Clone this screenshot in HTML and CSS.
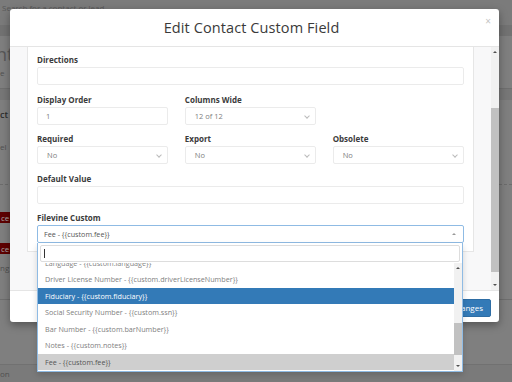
FILE: index.html
```html
<!DOCTYPE html>
<html lang="en">
<head>
<meta charset="utf-8">
<meta name="viewport" content="width=device-width,initial-scale=1">
<title>Edit Contact Custom Field</title>
<link rel="stylesheet" href="styles.css">
</head>
<body>

<!-- PAGE BEHIND THE MODAL (dimmed, mostly covered) -->
<div class="page">
  <div class="row topbar"><span class="search">Search for a contact or lead</span></div>
  <div class="row band"></div>
  <div class="row hero">
    <span class="big">nt</span>
    <span class="small">e</span>
  </div>
  <div class="row band2"></div>
  <div class="row r-ct"><span class="bold">ct</span></div>
  <div class="row r-el"><span class="small">el</span></div>
  <div class="row r-btn"><span class="redbtn">ce F</span></div>
  <div class="row r-btn2"><span class="redbtn">ce F</span></div>
  <div class="row r-ng"><span class="small">ng</span></div>
  <div class="row r-mid"></div>
  <div class="row r-foot"><span class="small">on</span></div>
</div>

<!-- MODAL -->
<div class="modal">
  <div class="modal-header">
    <h4>Edit Contact Custom Field</h4>
    <span class="close">×</span>
  </div>

  <div class="modal-body">
    <div class="scroll-area">
      <div class="card">
        <div class="group">
          <label>Directions</label>
          <div class="input"></div>
        </div>

        <div class="grid3">
          <div class="group">
            <label>Display Order</label>
            <div class="input">1</div>
          </div>
          <div class="group">
            <label>Columns Wide</label>
            <div class="input select">12 of 12<span class="chev"></span></div>
          </div>
        </div>

        <div class="grid3">
          <div class="group">
            <label>Required</label>
            <div class="input select">No<span class="chev"></span></div>
          </div>
          <div class="group">
            <label>Export</label>
            <div class="input select">No<span class="chev"></span></div>
          </div>
          <div class="group">
            <label>Obsolete</label>
            <div class="input select">No<span class="chev"></span></div>
          </div>
        </div>

        <div class="group">
          <label>Default Value</label>
          <div class="input"></div>
        </div>

        <div class="group last">
          <label>Filevine Custom</label>
          <div class="input select focus">Fee - {{custom.fee}}<span class="up"></span></div>
        </div>
      </div>
    </div>
    <div class="vscroll">
      <span class="arr up-a"></span>
      <div class="track"><div class="thumb body-thumb"></div></div>
      <span class="arr down-a"></span>
    </div>
  </div>

  <div class="modal-footer">
    <button class="btn-primary">Save Changes</button>
  </div>
</div>

<!-- OPEN SELECT DROPDOWN -->
<div class="dropdown">
  <div class="search-box"><span class="caret-i"></span></div>
  <div class="results">
    <ul class="options">
      <li>Language - {{custom.language}}</li>
      <li>Driver License Number - {{custom.driverLicenseNumber}}</li>
      <li class="hl">Fiduciary - {{custom.fiduciary}}</li>
      <li>Social Security Number - {{custom.ssn}}</li>
      <li>Bar Number - {{custom.barNumber}}</li>
      <li>Notes - {{custom.notes}}</li>
      <li class="sel">Fee - {{custom.fee}}</li>
    </ul>
    <div class="vscroll">
      <span class="arr up-a"></span>
      <div class="track"><div class="thumb list-thumb"></div></div>
      <span class="arr down-a"></span>
    </div>
  </div>
</div>

</body>
</html>
```

FILE: styles.css
```css
:root{
  --blue:#337ab7;
  --focus:#8fbbe4;
  --line:#e6e6e6;
  --txt:#808080;
}
*{box-sizing:border-box;margin:0;padding:0}
html,body{height:100%}
body{font-family:"Open Sans","Liberation Sans",Arial,sans-serif;background:#7c7c7c;color:#333;overflow:hidden;position:relative}

/* ---------- PAGE BEHIND ---------- */
.page{width:512px}
.row{width:100%;background:#7f7f7f;overflow:hidden;white-space:nowrap}
.row span{display:block}
.topbar{height:25px;background:#7b7b7b;padding:3px 0 0 2px}
.search{font-size:8px;color:#585858;line-height:10px}
.band{height:11px;background:#727272}
.hero{height:52px;padding-top:6px}
.big{font-size:18px;color:#585858;line-height:24px;text-indent:-4px}
.small{font-size:8px;color:#505050;line-height:14px}
.band2{height:12px;background:#777;border-top:1px solid #6f6f6f}
.r-ct{height:32px;padding-top:8px}
.bold{font-size:9px;font-weight:600;color:#2c2c2c}
.r-el{height:53px;padding-top:8px;border-bottom:1px dashed #6c6c6c}
.r-btn{height:42px;padding-top:19px}
.r-btn2{height:30px;padding-top:8px}
.row .redbtn{display:inline-block;width:40px;background:#5e0000;color:#aaa;font-size:8px;line-height:11px;padding-left:1px}
.r-ng{height:43px;padding-top:4px;border-bottom:1px solid #6e6e6e}
.r-mid{height:64px}
.r-foot{height:20px;background:#7a7a7a;border-top:1px solid #717171;padding-top:2px}

/* ---------- MODAL ---------- */
.modal{
  position:absolute;left:10px;top:9px;width:489px;
  background:#fff;border-radius:3px;
  box-shadow:0 3px 9px rgba(0,0,0,.35);overflow:hidden
}
.modal-header{height:38px;border-bottom:1px solid #e5e5e5;position:relative;display:flex;align-items:center;justify-content:center}
.modal-header h4{font-size:14.5px;font-weight:400;color:#3a3a3a;letter-spacing:.1px;margin-left:-6px}
.close{position:absolute;right:8px;top:5px;font-size:10px;color:#c4c4c4}

.modal-body{display:flex;height:243px;background:#f8f8f9}
.scroll-area{flex:1;padding:0 17px;overflow:hidden}
.card{background:#fff;border:1px solid var(--line);border-top:none;padding:7px 9px 8px}

.group{margin-bottom:8.5px}
.group.last{margin-bottom:0}
label{display:block;font-size:8px;font-weight:700;color:#3b3b3b;line-height:11px;margin-bottom:2px}
.input{
  height:18px;border:1px solid #ebebeb;border-radius:2px;
  font-size:7.5px;color:var(--txt);line-height:16px;padding:0 8px;position:relative
}
.select{padding-left:9px}
.chev{position:absolute;right:6px;top:6px;width:4px;height:4px;border-right:1px solid #bbb;border-bottom:1px solid #bbb;transform:rotate(45deg)}
.focus{border-color:var(--focus);color:#555;padding-left:6px;font-size:7.2px}
.up{position:absolute;right:7px;top:7px;border-left:2px solid transparent;border-right:2px solid transparent;border-bottom:2px solid #999}

.grid3{display:grid;grid-template-columns:repeat(3,1fr);column-gap:16.5px}

/* scrollbars */
.vscroll{width:8px;background:#f1f1f1;display:flex;flex-direction:column;align-items:center}
.arr{display:block;width:0;height:0;border-left:2px solid transparent;border-right:2px solid transparent;margin:4px 0}
.up-a{border-bottom:2px solid #505050}
.down-a{border-top:2px solid #505050}
.track{flex:1;width:100%}
.thumb{background:#c1c1c1;width:100%}
.body-thumb{margin-top:51px;height:164px}
.list-thumb{margin-top:50px;height:32px}

.modal-footer{height:32px;border-top:1px solid #e5e5e5;display:flex;justify-content:flex-end;align-items:center;padding:0 8px}
.btn-primary{
  background:var(--blue);color:#fff;border:1px solid #2e6da4;border-radius:2px;
  font-family:inherit;font-size:8px;height:18px;padding:0 7px;margin-top:2px
}

/* ---------- DROPDOWN ---------- */
.dropdown{
  position:absolute;left:37px;top:243px;width:426px;height:129px;
  background:#fff;border:1px solid var(--focus);border-top:none;
  box-shadow:0 3px 6px rgba(0,0,0,.15);display:flex;flex-direction:column
}
.search-box{height:17px;margin:2px 2px 1px;border:1px solid #ddd;border-radius:2px;position:relative}
.caret-i{position:absolute;left:3px;top:3px;width:1px;height:9px;background:#333}
.results{flex:1;display:flex;overflow:hidden}
.options{flex:1;list-style:none;overflow:hidden}
.options li{height:16.5px;line-height:16.5px;padding-left:7px;font-size:7.2px;color:var(--txt);white-space:nowrap}
.options li:first-child{margin-top:-8.5px}
.options li.hl{background:var(--blue);color:#fff}
.options li.sel{background:#cfcfcf;color:#555}
```
